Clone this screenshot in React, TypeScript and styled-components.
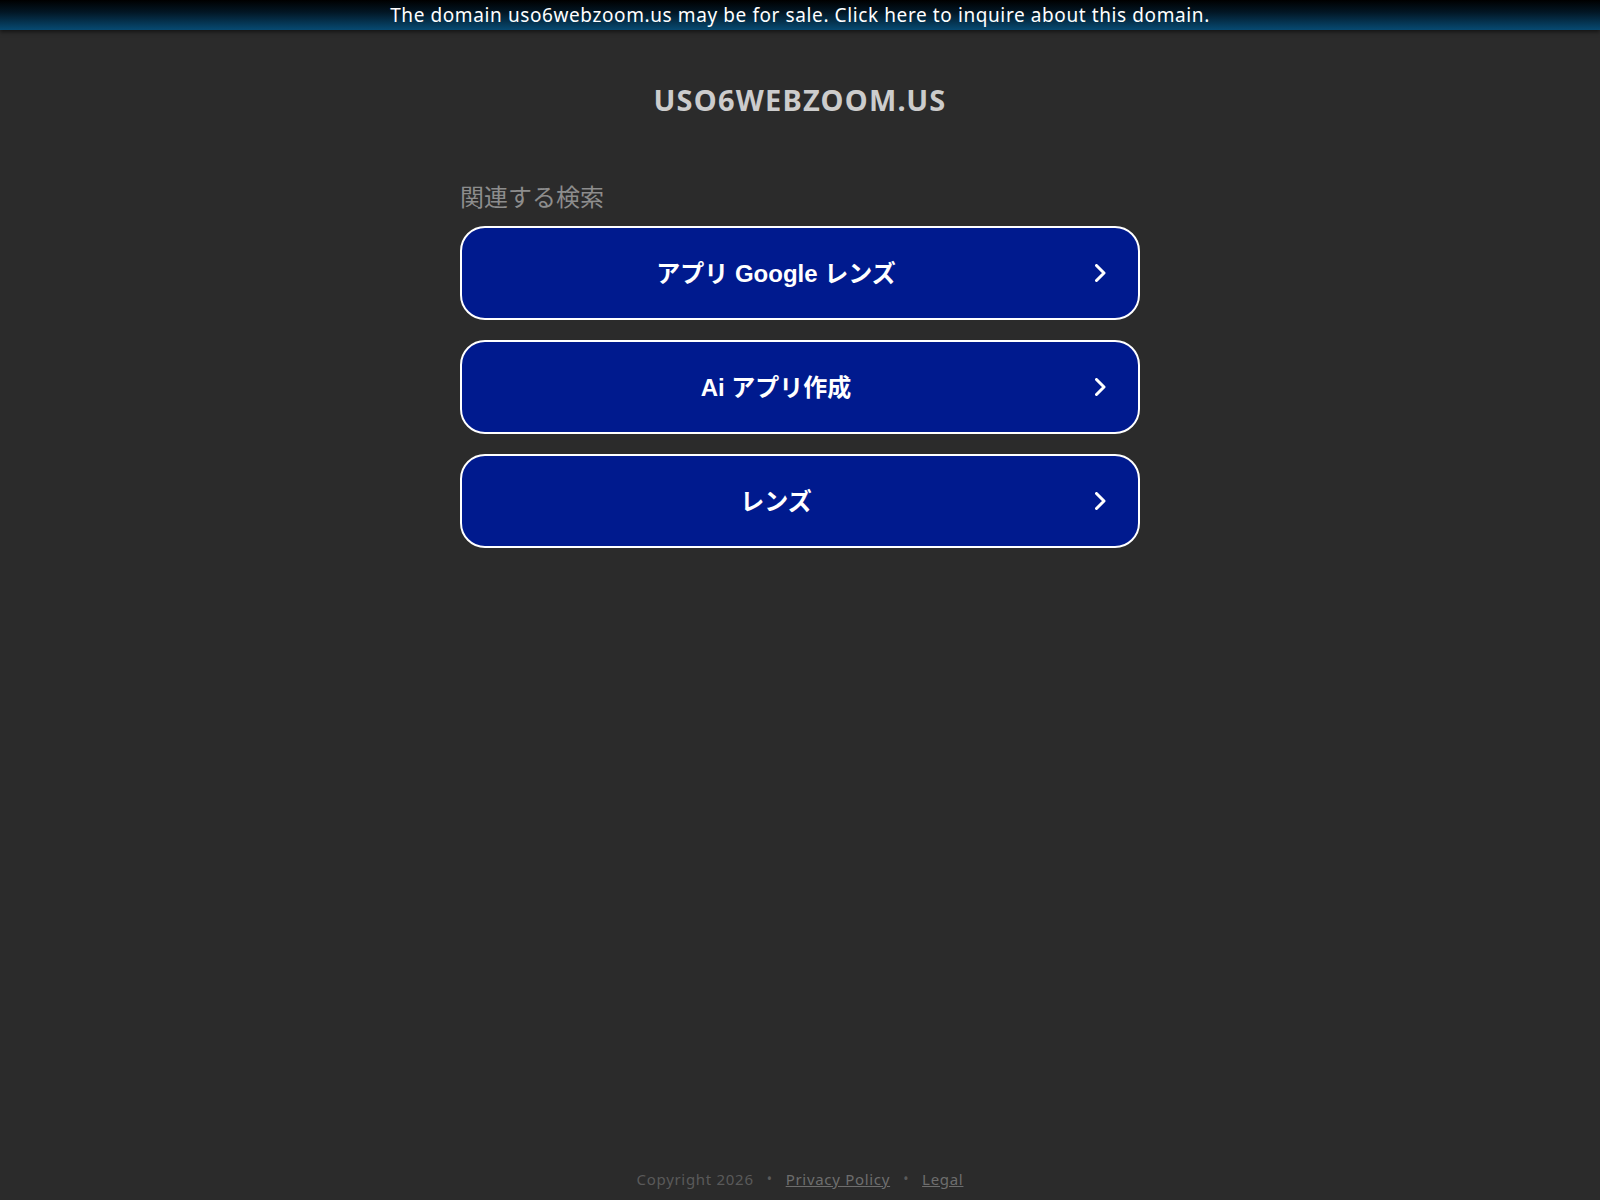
import styled, { createGlobalStyle } from "styled-components";

const searches = ["アプリ Google レンズ", "Ai アプリ作成", "レンズ"];

const GlobalStyle = createGlobalStyle`
  html, body {
    margin: 0;
    padding: 0;
    background: #2b2b2b;
  }
  body {
    font-family: "Noto Sans", "Noto Sans CJK JP", sans-serif;
  }
`;

export default function App() {
  return (
    <>
      <GlobalStyle />
      <Page>
        <Banner href="#">
          The domain uso6webzoom.us may be for sale. Click here to inquire about
          this domain.
        </Banner>
        <Main>
          <DomainTitle>uso6webzoom.us</DomainTitle>
          <Searches>
            <SearchLabel>関連する検索</SearchLabel>
            {searches.map((term) => (
              <SearchButton key={term} href="#">
                <ButtonText>{term}</ButtonText>
                <Chevron />
              </SearchButton>
            ))}
          </Searches>
        </Main>
        <Footer>
          <span>Copyright 2026</span>
          <Dot>•</Dot>
          <FooterLink href="#">Privacy Policy</FooterLink>
          <Dot>•</Dot>
          <FooterLink href="#">Legal</FooterLink>
        </Footer>
      </Page>
    </>
  );
}

const Chevron = () => (
  <ChevronSvg viewBox="0 0 11 18" width="11" height="18">
    <polyline
      points="1.5,1.5 9,9 1.5,16.5"
      fill="none"
      stroke="#ffffff"
      strokeWidth="3"
      strokeLinecap="round"
      strokeLinejoin="round"
    />
  </ChevronSvg>
);

const Page = styled.div`
  min-height: 100vh;
  display: flex;
  flex-direction: column;
`;

const Banner = styled.a`
  display: block;
  height: 30px;
  line-height: 30px;
  text-align: center;
  color: #ffffff;
  text-decoration: none;
  font-size: 19px;
  letter-spacing: 0.6px;
  background: linear-gradient(to bottom, #000000 0%, #021624 40%, #074a72 100%);
  box-shadow: 0 2px 4px rgba(0, 0, 0, 0.55);
`;

const Main = styled.main`
  flex: 1;
  display: flex;
  flex-direction: column;
  align-items: center;
`;

const DomainTitle = styled.h1`
  margin: 50px 0 0;
  font-size: 29px;
  line-height: 40px;
  font-weight: 700;
  letter-spacing: 1.2px;
  text-transform: uppercase;
  color: #cccccc;
`;

const Searches = styled.section`
  width: 680px;
  margin-top: 61px;
  display: flex;
  flex-direction: column;
  gap: 20px;
`;

const SearchLabel = styled.div`
  font-size: 24px;
  line-height: 32px;
  color: #8d8d8d;
  margin-bottom: -7px;
`;

const SearchButton = styled.a`
  box-sizing: border-box;
  height: 94px;
  display: flex;
  align-items: center;
  gap: 37px;
  padding: 0 32px;
  border: 2px solid #ffffff;
  border-radius: 25px;
  background: #001a8e;
  color: #ffffff;
  text-decoration: none;
`;

const ButtonText = styled.span`
  flex: 1;
  margin-bottom: 4px;
  text-align: center;
  font-family: "Liberation Sans", Arial, "Noto Sans CJK JP", sans-serif;
  font-size: 24px;
  font-weight: 700;
`;

const ChevronSvg = styled.svg`
  flex-shrink: 0;
  display: block;
`;

const Footer = styled.footer`
  display: flex;
  justify-content: center;
  align-items: center;
  gap: 13px;
  padding-bottom: 11px;
  font-size: 15px;
  line-height: 20px;
  letter-spacing: 0.7px;
  color: #5a5a5a;
`;

const Dot = styled.span`
  font-size: 14px;
  color: #5a5a5a;
`;

const FooterLink = styled.a`
  color: #6e6e6e;
  text-decoration: underline;
`;
